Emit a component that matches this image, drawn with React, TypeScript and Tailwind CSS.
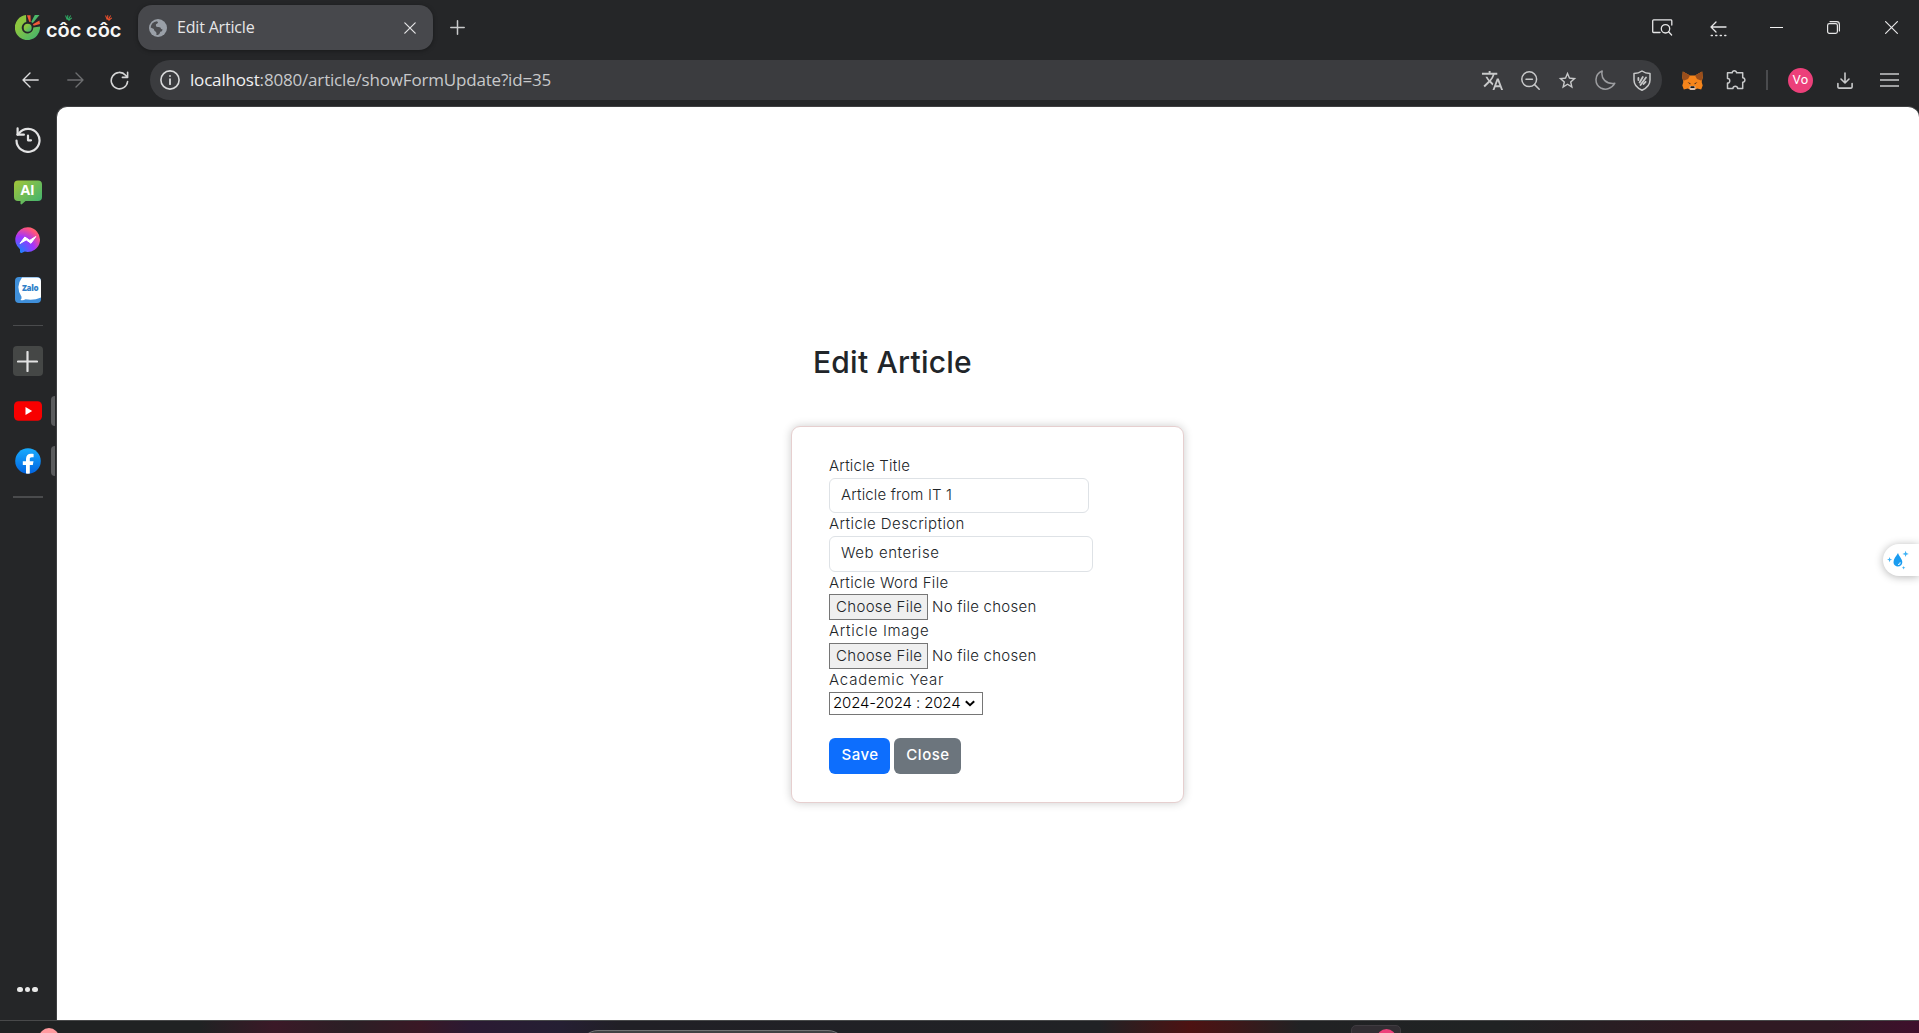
import type { ReactNode } from "react";
import { MdTranslate, MdStarOutline } from "react-icons/md";

const stroke = {
  fill: "none",
  stroke: "currentColor",
  strokeLinecap: "round" as const,
  strokeLinejoin: "round" as const,
};

function CocCocLogo() {
  return (
    <div className="flex h-[25px] items-center">
      <svg width="25" height="25" viewBox="0 0 25 25">
        <defs>
          <linearGradient id="leaf" x1="0" y1="0" x2="1" y2="1">
            <stop offset="0.3" stopColor="#8cc63f" />
            <stop offset="1" stopColor="#3bb273" />
          </linearGradient>
        </defs>
        <path d="M11 0A12.6 12.6 0 1 0 25 11.5L18.3 12.4A5.8 5.8 0 1 1 11.3 7z" fill="url(#leaf)" />
        <circle cx="12.7" cy="12.7" r="4" fill="url(#leaf)" />
        <path d="M12 0.3l3.5 0 0.2 6.7-1.5-.3z" fill="#f15a38" />
        <path d="M19.8 0H24.5L17.8 8 16.2 7z" fill="#4cb86a" />
        <path d="M24.4 5.6l.6 3.5-6.3 1.6-.8-1.4z" fill="#f15a38" />
      </svg>
      <div className="relative ml-[6px] mt-[4px] whitespace-nowrap font-[Inter] text-[20px] leading-5 font-semibold tracking-[-0.1px] text-[#f7f7f7]">
        côc côc
        <svg className="absolute left-[19px] top-[-5px]" width="7" height="7" viewBox="0 0 8 8" {...stroke} strokeWidth="1.2" color="#2fae66">
          <path d="M.8 1l1.6 4M3.2.6L3 4.5M6.2 1L4 5.2M7.4 3.6L4.4 6" />
        </svg>
        <svg className="absolute left-[59px] top-[-5px]" width="7" height="7" viewBox="0 0 8 8" {...stroke} strokeWidth="1.2" color="#f0512d">
          <path d="M.8 1l1.6 4M3.2.6L3 4.5M6.2 1L4 5.2M7.4 3.6L4.4 6" />
        </svg>
      </div>
    </div>
  );
}

function Globe() {
  return (
    <svg width="18" height="18" viewBox="0 0 18 18">
      <circle cx="9" cy="9" r="9" fill="#9aa0a8" />
      <path d="M8 2.2 Q10 3.4 8.3 4.6 Q6.4 5.2 6.9 6.8 Q7 8.2 9.2 8.1 Q12 8 12.1 10 L13.6 10.4 Q13.4 12.8 11.3 12.8 Q10.8 15.3 8.8 16.1 L7.4 16 Q8 13.6 6.7 12.7 Q4.8 11.5 4.8 10 L1.7 8.4 Q2 3.3 8 2.2z" fill="#4b4c50" />
    </svg>
  );
}

function TitleBar() {
  return (
    <div className="flex h-[55px] items-center pl-[15px] pr-[21px] text-[#e6e6e7]">
      <div className="w-[123px] shrink-0">
        <CocCocLogo />
      </div>
      <div className="flex h-[45px] w-[295px] items-center rounded-[14px] bg-[#47484c] pl-[11px] pr-[17px] shadow-[0_1px_4px_rgba(0,0,0,0.35)]">
        <Globe />
        <span className="-mt-px ml-[10px] flex-1 font-['Open_Sans'] text-[16px] leading-6 tracking-[-0.18px]">Edit Article</span>
        <svg width="12" height="12" viewBox="0 0 12 12" {...stroke} strokeWidth="1.2">
          <path d="M.8.8l10.4 10.4M11.2.8L.8 11.2" />
        </svg>
      </div>
      <svg className="ml-[17px] text-[#c9cacb]" width="15" height="15" viewBox="0 0 15 15" {...stroke} strokeWidth="1.5">
        <path d="M7.5.8v13.4M.8 7.5h13.4" />
      </svg>
      <div className="flex-1" />
      <svg width="21" height="17" viewBox="0 0 21 17" {...stroke} strokeWidth="1.3">
        <path d="M8 13.5H1.6A1 1 0 0 1 .7 12.5V1.7A1 1 0 0 1 1.6 .8H18.8A1 1 0 0 1 19.8 1.7V6" />
        <circle cx="13.5" cy="9.8" r="4.2" />
        <path d="M16.600 12.8l3 3.2" />
      </svg>
      <svg className="ml-[37px] mt-[2px]" width="17" height="16" viewBox="0 0 17 16" {...stroke} strokeWidth="1.3">
        <path d="M16 6H1M6 1L1 6l5 5" />
        <path d="M1.2 14.5h1.2M5.700 14.5h1.2M10.200 14.5h1.2M14.700 14.5h1.2" />
      </svg>
      <span className="ml-[43px] h-px w-[13px] bg-[#f2f2f2]" />
      <svg className="ml-[44px]" width="13" height="13" viewBox="0 0 13 13" {...stroke} strokeWidth="1.2">
        <rect x=".6" y="2.6" width="9.8" height="9.8" rx="1.8" />
        <path d="M3 .6h6.6a2.8 2.8 0 0 1 2.8 2.8V10" />
      </svg>
      <svg className="ml-[45px]" width="13" height="13" viewBox="0 0 13 13" {...stroke} strokeWidth="1.2">
        <path d="M.6.6l11.8 11.8M12.4.6L.6 12.4" />
      </svg>
    </div>
  );
}

function Fox() {
  return (
    <svg width="21" height="19" viewBox="0 0 21 19">
      <path d="M.8.5L8 4.5h5L20.2.5l.5 6-1 4.500 1 3.500-1.500 4-4-1-2.500 1.300H8.300L5.800 17.500l-4 1-1.500-4 1-3.500-1-4.500z" fill="#f6851b" />
      <path d="M.8.5L8 4.500l-2 3.500-4.500 1.800L.3 6.500zM20.2.5L13 4.500l2 3.500 4.500 1.800 1.200-3.800z" fill="#9a4e1c" />
      <path d="M5.500 11l3 1.200-.3 1.300zM15.500 11l-3 1.200.3 1.300z" fill="#3a2a24" />
      <path d="M7.800 15h5.400l.3 3-1 1h-4l-1-1z" fill="#d7c1b3" />
      <path d="M8.700 15.200h3.600l.3 1.800H8.400z" fill="#161616" />
    </svg>
  );
}

function Toolbar() {
  return (
    <div className="flex h-[50px] items-center pl-[22px] pr-[20px] text-[#c8c9ca]">
      <svg className="text-[#dcdcdd]" width="17" height="16" viewBox="0 0 17 16" {...stroke} strokeWidth="1.4">
        <path d="M16.200 8H1M8 1L1 8l7 7" />
      </svg>
      <svg className="ml-[28px] text-[#6d6e70]" width="17" height="16" viewBox="0 0 17 16" {...stroke} strokeWidth="1.4">
        <path d="M.8 8H16M9 1l7 7-7 7" />
      </svg>
      <svg className="ml-[26px] text-[#d4d4d5]" width="19" height="19" viewBox="0 0 19 19" {...stroke} strokeWidth="1.6">
        <path d="M17.600 10.500A8.200 8.200 0 1 1 15.600 4.200L17.500 6.200M17.600 1.200V6.400H12.400" />
      </svg>
      <div className="ml-[21px] flex h-10 w-[1512px] items-center rounded-full bg-[#3b3c3f] pl-[10px] pr-[11px]">
        <svg className="text-[#d8d9da]" width="20" height="20" viewBox="0 0 20 20" {...stroke} strokeWidth="1.600">
          <circle cx="10" cy="10" r="9.100" />
          <path d="M10 9.200v5M10 5.900v.2" strokeWidth="1.800" />
        </svg>
        <span className="-mt-px ml-[10px] flex-1 font-['Open_Sans'] text-[17px] leading-6 tracking-[-0.18px] text-[#c8c9cb]">
          <span className="text-[#f1f1f2]">localhost</span>:8080/article/showFormUpdate?id=35
        </span>
        <MdTranslate size={23} />
        <svg className="ml-[17px]" width="19" height="19" viewBox="0 0 19 19" {...stroke} strokeWidth="1.500">
          <circle cx="8.200" cy="8.200" r="7.400" />
          <path d="M13.600 13.600l4.600 4.600M5 8.200h6.400" />
        </svg>
        <MdStarOutline className="ml-[17px]" size={21} />
        <svg className="ml-[17px] text-[#9c9da0]" width="21" height="20" viewBox="0 0 21 20" {...stroke} strokeWidth="1.500">
          <path d="M7.200 1C5.500 8.500 11 14.500 19.800 13.200C17 18.500 11 20.600 5.800 18C-.8 14.300-.8 4.300 7.200 1z" />
        </svg>
        <svg className="ml-[17px]" width="18" height="21" viewBox="0 0 18 21" {...stroke} strokeWidth="1.500">
          <path d="M9 1C6.500 2.800 4 3.500 1 3.600V10c0 4.800 3 8 8 10.200 5-2.200 8-5.400 8-10.200V3.600C14 3.500 11.500 2.800 9 1z" />
          <path d="M5.400 8v2M9.800 7L6.600 12.500M13 7.500L7.500 15M12.600 11.800l-2 2.200" strokeWidth="1.800" />
        </svg>
      </div>
      <div className="ml-[20px]"><Fox /></div>
      <svg className="ml-[23px]" width="20" height="20" viewBox="0 0 20 20" {...stroke} strokeWidth="1.500">
        <path d="M1.500 2.800H6.300C5.800 .2 10.900 .2 10.500 2.800H16.700V7.800C19.600 7.500 19.600 12.500 16.700 12.200V18.500H11.600C12 15.600 6.600 15.600 7 18.500H1.500V13C4.500 13.400 4.500 8 1.500 8.400z" />
      </svg>
      <span className="ml-[20px] h-5 w-[2px] bg-[#4a4b4e]" />
      <span className="ml-[20px] flex size-[25px] items-center justify-center rounded-full bg-[#ec407a] font-[Roboto] text-[13px] tracking-[0.3px] text-white">Vo</span>
      <svg className="ml-[24px]" width="16" height="17" viewBox="0 0 16 17" {...stroke} strokeWidth="1.600">
        <path d="M8 1v9.500M4 7l4 4 4-4M.9 11.500v3.600c0 .6.400 1 1 1h12.200c.6 0 1-.4 1-1v-3.600" />
      </svg>
      <svg className="ml-auto" width="19" height="14" viewBox="0 0 19 14">
        <path d="M0 1h19M0 7h19M0 13h19" stroke="currentColor" strokeWidth="1.600" />
      </svg>
    </div>
  );
}

function Sidebar() {
  return (
    <aside className="relative flex w-14 shrink-0 flex-col items-center pr-px pt-[21px]">
      <svg className="text-[#e3e3e4]" width="26" height="26" viewBox="0 0 26 26" {...stroke} strokeWidth="2.200">
        <path d="M1.500 13.500A11.500 11.500 0 1 0 4 6.200L2.500 7.600" />
        <path d="M2.600 1.400V7.700H8.900M13 8.700v4.600h3" />
      </svg>
      <svg className="mt-[27px]" width="28" height="25" viewBox="0 0 28 25">
        <defs>
          <linearGradient id="ai" x1="0" y1="0" x2="1" y2="1">
            <stop offset="0" stopColor="#a4c639" />
            <stop offset="1" stopColor="#3bb273" />
          </linearGradient>
        </defs>
        <path d="M4 .500H24a4 4 0 0 1 4 4V17a4 4 0 0 1-4 4H11.500L7.500 24.500 6.500 24V21H4a4 4 0 0 1-4-4V4.500a4 4 0 0 1 4-4z" fill="url(#ai)" />
        <text x="13.600" y="15.200" textAnchor="middle" fontFamily="Open Sans" fontWeight="700" fontSize="14" fill="#fff">AI</text>
      </svg>
      <svg className="mt-[22px]" width="26" height="26" viewBox="0 0 26 26">
        <defs>
          <radialGradient id="msg" cx="0.15" cy="1" r="1.150">
            <stop offset="0" stopColor="#0a8cff" />
            <stop offset="0.550" stopColor="#a033ff" />
            <stop offset="0.880" stopColor="#ff5280" />
            <stop offset="1" stopColor="#ff7061" />
          </radialGradient>
        </defs>
        <path d="M13 .3A12.500 12.300 0 1 1 9.800 24.600L6.500 25.900C5.600 26.100 5 25.500 5 24.800V22.200A12.500 12.300 0 0 1 13 .3z" fill="url(#msg)" />
        <path d="M5 16.500L9.800 10l5 3.300 6-3.800L16 16.300l-4.800-3.400z" fill="#fff" stroke="#fff" strokeLinejoin="round" />
      </svg>
      <svg className="mt-[24px]" width="26" height="26" viewBox="0 0 26 26">
        <rect width="26" height="26" rx="4" fill="#3f8fda" />
        <path d="M7 .6H22a4 4 0 0 1 4 4V20.500a26 26 0 0 1-15.500 1.800Q8 24 5.500 23 Q7 21.800 6.500 19.800Q0 10 7 .6z" fill="#fff" />
        <text x="15.200" y="14" textAnchor="middle" fontFamily="Open Sans" fontWeight="800" fontSize="8" letterSpacing="-0.300" fill="#2f80c8">Zalo</text>
      </svg>
      <span className="mt-[22px] h-px w-[30px] bg-[#4a4b4d]" />
      <span className="mt-[20px] flex size-[30px] shrink-0 items-center justify-center rounded-[4px] bg-[#454746]">
        <svg width="21" height="21" viewBox="0 0 21 21" {...stroke} strokeWidth="2.200" color="#e2e2e2">
          <path d="M10.500 1v19M1 10.500h19" />
        </svg>
      </span>
      <svg className="mt-[25px]" width="28" height="20" viewBox="0 0 28 20">
        <rect y=".3" width="28" height="19.400" rx="4.500" fill="#f80000" />
        <path d="M11.500 6v8l6.700-4z" fill="#fff" />
      </svg>
      <svg className="mt-[27px]" width="26" height="26" viewBox="0 0 26 26">
        <defs>
          <linearGradient id="fb" x1="0" y1="0" x2="0" y2="1">
            <stop offset="0" stopColor="#18acfe" />
            <stop offset="1" stopColor="#0163e0" />
          </linearGradient>
        </defs>
        <circle cx="13" cy="13" r="12.800" fill="url(#fb)" />
        <path d="M11 25.600V17H7.800v-3.800H11V11c0-3.400 2-5.200 5-5.200 1 0 2 .1 2.600.2v3.200h-1.800c-1.600 0-2 .8-2 1.800v2.200h3.700l-.7 3.800h-3v8.600a13 13 0 0 1-3.800 0z" fill="#fff" />
      </svg>
      <span className="mt-[22px] h-[2px] w-[30px] bg-[#4a4b4d]" />
      <span className="absolute right-px top-[290px] h-[30px] w-[4px] rounded-l bg-[#5b5c5e]" />
      <span className="absolute right-px top-[340px] h-[30px] w-[4px] rounded-l bg-[#5b5c5e]" />
      <div className="mb-[28px] mt-auto flex gap-[2px]">
        <span className="size-[5.500px] rounded-full bg-[#e8e8e8]" />
        <span className="size-[5.500px] rounded-full bg-[#e8e8e8]" />
        <span className="size-[5.500px] rounded-full bg-[#e8e8e8]" />
      </div>
    </aside>
  );
}

function Label({ className, children }: { className: string; children: ReactNode }) {
  return <label className={"flex items-center text-[#212529] " + className}>{children}</label>;
}

function FileInput() {
  return (
    <div className="flex h-[26px] items-center">
      <button type="button" className="flex h-[26px] w-[99px] items-center border border-[#767676] bg-[#efefef] pl-[6px] tracking-[0.33px] text-[#212529]">
        Choose File
      </button>
      <span className="ml-1 tracking-[0.25px] text-[#212529]">No file chosen</span>
    </div>
  );
}

function ArticleForm() {
  return (
    <form className="ml-[734px] flex h-[377px] w-[393px] flex-col items-start rounded-[9px] border border-[#e6cfcf] bg-white pl-[37px] pt-[27px] font-[Inter] text-[15px] font-light shadow-[0_0_10px_rgba(0,0,0,0.2)]">
      <Label className="h-6 tracking-[0.22px]">Article Title</Label>
      <div className="flex h-[35px] w-[260px] items-center rounded-md border border-[#dee2e6] pl-[11px] tracking-[0.15px] text-[#212529]">Article from IT 1</div>
      <Label className="h-[23px] tracking-[0.42px]">Article Description</Label>
      <div className="flex h-9 w-[264px] items-center rounded-md border border-[#dee2e6] pb-[2px] pl-[11px] tracking-[0.56px] text-[#212529]">Web enterise</div>
      <Label className="h-[22px] tracking-[0.32px]">Article Word File</Label>
      <FileInput />
      <Label className="h-[23px] tracking-[0.68px]">Article Image</Label>
      <FileInput />
      <Label className="h-[23px] tracking-[0.79px]">Academic Year</Label>
      <div className="flex h-[23px] w-[154px] items-center border border-[#767676] pl-[3px] tracking-[-0.13px] text-black">
        2024-2024 : 2024
        <svg className="ml-[4px]" width="10" height="7" viewBox="0 0 10 7" fill="none" stroke="#000" strokeWidth="2">
          <path d="M.8 1.200L5 5.200l4.200-4" />
        </svg>
      </div>
      <div className="mt-[23px] flex gap-1 font-medium text-white">
        <button type="button" className="h-9 w-[61px] rounded-md bg-[#0d6efd] pb-px pl-px tracking-[0.45px]">Save</button>
        <button type="button" className="h-9 w-[67px] rounded-md bg-[#6c757d] pb-px pl-px tracking-[0.55px]">Close</button>
      </div>
    </form>
  );
}

function Page() {
  return (
    <main className="relative flex-1 overflow-hidden rounded-t-[11px] border-l border-t border-[#3f4042] bg-white pt-[235px]">
      <h2 className="mb-[44px] ml-[756px] h-10 font-[Inter] text-[30px] leading-10 font-medium tracking-[0.24px] text-[#212529]">Edit Article</h2>
      <ArticleForm />
      <div className="absolute right-0 top-[437px] flex h-8 w-[36px] items-center rounded-l-full bg-white pl-[4px] shadow-[0_1px_8px_rgba(0,0,0,0.3)]">
        <svg width="22" height="20" viewBox="0 0 22 20">
          <path d="M11 3C9 6.500 6.500 8.700 6.500 12.200a4.400 4.400 0 0 0 8.800 0C15.300 9 12.500 7 11 3z" fill="#1a9cf0" />
          <path d="M11 14.500a2 2 0 0 0 2.200-2.200" stroke="#fff" fill="none" />
          <path d="M18.600.8l.8 2.300 2.400.8-2.400.8-.8 2.300-.8-2.300-2.400-.8 2.400-.8zM2.600 7l.7 1.900 1.900.7-1.900.7-.7 1.900-.7-1.900L0 9.600l1.900-.7zM16.600 16l.5 1.300 1.300.5-1.300.5-.5 1.300-.5-1.300-1.300-.5 1.300-.5z" fill="#3fb2f5" />
        </svg>
      </div>
    </main>
  );
}

function Taskbar() {
  return (
    <footer className="relative h-[13px] overflow-hidden border-t border-[#48494a] bg-[linear-gradient(90deg,#202223_0px,#202223_200px,#3b1927_275px,#2b1f25_350px,#3a1825_420px,#2b1a33_470px,#251f33_560px,#212026_620px,#212225_1100px,#4d1212_1190px,#401718_1230px,#212224_1300px,#202324_1500px,#301a22_1700px,#301a24_1830px,#3f0f2c_1919px)]">
      <span className="absolute left-[39px] top-[7px] size-[20px] rounded-full bg-[#ff9a9e]" />
      <span className="absolute left-[580px] top-[9px] h-10 w-[266px] rounded-[18px] border border-[#737375] bg-[#414144]" />
      <span className="absolute left-[1351px] top-[4px] h-10 w-[50px] rounded-[5px] border border-[#403c41] bg-[#322e33]" />
      <span className="absolute left-[1377px] top-[8px] size-[19px] rounded-full bg-[#ec407a]" />
    </footer>
  );
}

export default function App() {
  return (
    <div className="flex h-[1033px] w-[1919px] flex-col overflow-hidden bg-[#252628]">
      <TitleBar />
      <Toolbar />
      <div className="mt-px flex flex-1">
        <Sidebar />
        <Page />
      </div>
      <Taskbar />
    </div>
  );
}
